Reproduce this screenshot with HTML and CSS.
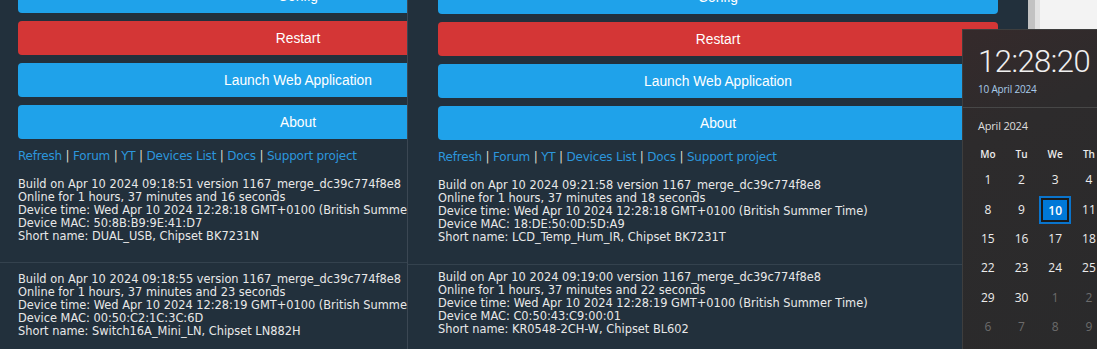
FILE: index.html
```html
<!DOCTYPE html>
<html lang="en">
<head>
  <meta charset="UTF-8" />
  <title>OpenBeken devices</title>
  <link rel="stylesheet" href="styles.css">
</head>
<body>
  <div class="desktop">

    <!-- top left device -->
    <section class="win win-a">
      <div class="page">
        <div class="buttons">
          <button class="btn">Config</button>
          <button class="btn btn-red">Restart</button>
          <button class="btn">Launch Web Application</button>
          <button class="btn">About</button>
        </div>
        <p class="links"><a>Refresh</a> | <a>Forum</a> | <a>YT</a> | <a>Devices List</a> | <a>Docs</a> | <a>Support project</a></p>
        <p class="info">
          Build on Apr 10 2024 09:18:51 version 1167_merge_dc39c774f8e8<br>
          Online for 1 hours, 37 minutes and 16 seconds<br>
          Device time: Wed Apr 10 2024 12:28:18 GMT+0100 (British Summer Time)<br>
          Device MAC: 50:8B:B9:9E:41:D7<br>
          Short name: DUAL_USB, Chipset BK7231N
        </p>
      </div>
    </section>

    <!-- bottom left device -->
    <section class="win win-b">
      <div class="page">
        <p class="info">
          Build on Apr 10 2024 09:18:55 version 1167_merge_dc39c774f8e8<br>
          Online for 1 hours, 37 minutes and 23 seconds<br>
          Device time: Wed Apr 10 2024 12:28:19 GMT+0100 (British Summer Time)<br>
          Device MAC: 00:50:C2:1C:3C:6D<br>
          Short name: Switch16A_Mini_LN, Chipset LN882H
        </p>
      </div>
    </section>

    <!-- top right device -->
    <section class="win win-c">
      <div class="page">
        <div class="buttons">
          <button class="btn">Config</button>
          <button class="btn btn-red">Restart</button>
          <button class="btn">Launch Web Application</button>
          <button class="btn">About</button>
        </div>
        <p class="links"><a>Refresh</a> | <a>Forum</a> | <a>YT</a> | <a>Devices List</a> | <a>Docs</a> | <a>Support project</a></p>
        <p class="info">
          Build on Apr 10 2024 09:21:58 version 1167_merge_dc39c774f8e8<br>
          Online for 1 hours, 37 minutes and 18 seconds<br>
          Device time: Wed Apr 10 2024 12:28:18 GMT+0100 (British Summer Time)<br>
          Device MAC: 18:DE:50:0D:5D:A9<br>
          Short name: LCD_Temp_Hum_IR, Chipset BK7231T
        </p>
      </div>
    </section>

    <!-- bottom right device -->
    <section class="win win-d">
      <div class="page">
        <p class="info">
          Build on Apr 10 2024 09:19:00 version 1167_merge_dc39c774f8e8<br>
          Online for 1 hours, 37 minutes and 22 seconds<br>
          Device time: Wed Apr 10 2024 12:28:19 GMT+0100 (British Summer Time)<br>
          Device MAC: C0:50:43:C9:00:01<br>
          Short name: KR0548-2CH-W, Chipset BL602
        </p>
      </div>
    </section>

    <div class="win-side"></div>

    <!-- clock / calendar flyout -->
    <aside class="flyout">
      <div class="clock">
        <div class="time">12:28:20</div>
        <div class="date">10 April 2024</div>
      </div>
      <div class="cal">
        <div class="month">April 2024</div>
        <div class="grid">
          <span class="dow">Mo</span><span class="dow">Tu</span><span class="dow">We</span><span class="dow">Th</span><span class="dow">Fr</span><span class="dow">Sa</span><span class="dow">Su</span>
          <span>1</span><span>2</span><span>3</span><span>4</span><span>5</span><span>6</span><span>7</span>
          <span>8</span><span>9</span><span class="today">10</span><span>11</span><span>12</span><span>13</span><span>14</span>
          <span>15</span><span>16</span><span>17</span><span>18</span><span>19</span><span>20</span><span>21</span>
          <span>22</span><span>23</span><span>24</span><span>25</span><span>26</span><span>27</span><span>28</span>
          <span>29</span><span>30</span><span class="other">1</span><span class="other">2</span><span class="other">3</span><span class="other">4</span><span class="other">5</span>
          <span class="other">6</span><span class="other">7</span><span class="other">8</span><span class="other">9</span><span class="other">10</span><span class="other">11</span><span class="other">12</span>
        </div>
      </div>
    </aside>

  </div>
</body>
</html>
```

FILE: styles.css
```css
:root {
  --page-bg: #22303c;
  --line: #34424e;
  --btn-blue: #1fa2ea;
  --btn-red: #d43636;
  --link: #2c97dd;
  --text: #e8e8e8;
}

* {
  margin: 0;
  padding: 0;
  box-sizing: border-box;
}

body {
  background: var(--page-bg);
  overflow: hidden;
}

.desktop {
  position: relative;
  width: 1097px;
  height: 349px;
  overflow: hidden;
}

/* browser windows */
.win {
  position: absolute;
  background: var(--page-bg);
  overflow: hidden;
  color: var(--text);
}

.win-a {
  left: 0;
  top: 0;
  width: 407px;
  height: 263px;
  border-bottom: 1px solid var(--line);
}

.win-b {
  left: 0;
  top: 263px;
  width: 407px;
  height: 86px;
}

.win-c {
  left: 407px;
  top: 0;
  width: 621px;
  height: 265px;
  border-left: 1px solid #3b4753;
  border-bottom: 1px solid var(--line);
}

.win-d {
  left: 407px;
  top: 265px;
  width: 621px;
  height: 84px;
  border-left: 1px solid #3b4753;
}

.win-side {
  position: absolute;
  left: 1028px;
  top: 0;
  width: 69px;
  height: 349px;
  background: #f3f3f3;
  border-left: 7px solid #c2c2c2;
  box-shadow: inset 5px 0 0 #e2e2e2;
}

.page {
  width: 600px;
  padding-left: 18px;
}

.win-c .page,
.win-d .page {
  padding-left: 30px;
}

.buttons {
  display: flex;
  flex-direction: column;
  gap: 8px;
  margin-top: -21px;
}

.win-c .buttons {
  margin-top: -20px;
}

.btn {
  width: 560px;
  height: 34px;
  border: none;
  border-radius: 4px;
  background: var(--btn-blue);
  color: #fff;
  font-family: "Liberation Sans", Arial, sans-serif;
  font-size: 13.8px;
}

.btn-red {
  background: var(--btn-red);
}

.links {
  margin-top: 9px;
  line-height: 16px;
  font-family: "DejaVu Sans", Verdana, sans-serif;
  font-size: 12px;
  letter-spacing: -0.2px;
  color: #ddd8cc;
}

.links a {
  color: var(--link);
}

.info {
  margin-top: 14px;
  font-family: "DejaVu Sans", Verdana, sans-serif;
  font-size: 11.4px;
  line-height: 13px;
  white-space: nowrap;
}

.win-b .info {
  padding-top: 10px;
  margin-top: 0;
}

.win-d .info {
  padding-top: 6px;
  margin-top: 0;
}

/* clock flyout */
.flyout {
  position: absolute;
  left: 962px;
  top: 29px;
  width: 140px;
  height: 330px;
  border-left: 1px solid #3e3e3e;
  border-top: 1px solid #3e3e3e;
  background: linear-gradient(155deg, #352a2b 0%, #2d2b2c 30%, #2a2a2b 100%);
  color: #f0f0f0;
  font-family: "Open Sans", "Noto Sans", sans-serif;
  overflow: hidden;
}

.clock {
  padding: 14px 0 0 15px;
  height: 78px;
  border-bottom: 1px solid #474747;
}

.time {
  font-family: "Roboto Light", "Open Sans Light", "Lato Light", Roboto, sans-serif;
  font-weight: 300;
  font-size: 31px;
  letter-spacing: -0.5px;
  line-height: 36px;
  white-space: nowrap;
}

.date {
  margin-top: 2px;
  font-size: 10px;
  letter-spacing: -0.2px;
  color: #a9cbe9;
}

.cal {
  padding: 10px 0 0 8px;
}

.month {
  padding-left: 7px;
  font-size: 11px;
  letter-spacing: -0.2px;
  color: #dddddd;
  line-height: 16px;
}

.grid {
  display: grid;
  grid-template-columns: repeat(7, 33.7px);
  grid-template-rows: 22px;
  grid-auto-rows: 29.4px;
  margin-top: 9px;
  font-size: 12px;
  width: 236px;
}

.grid span {
  display: flex;
  align-items: center;
  justify-content: center;
  color: #ececec;
}

.grid .dow {
  font-size: 10px;
  font-weight: 600;
}

.grid .other {
  color: #6c6c6c;
}

.grid .today {
  margin: 4px 3px 2px 3px;
  background: #0078d7;
  border: 2px solid #1a1a1a;
  outline: 2px solid #0a74cc;
  font-weight: 600;
  color: #fff;
}
```
